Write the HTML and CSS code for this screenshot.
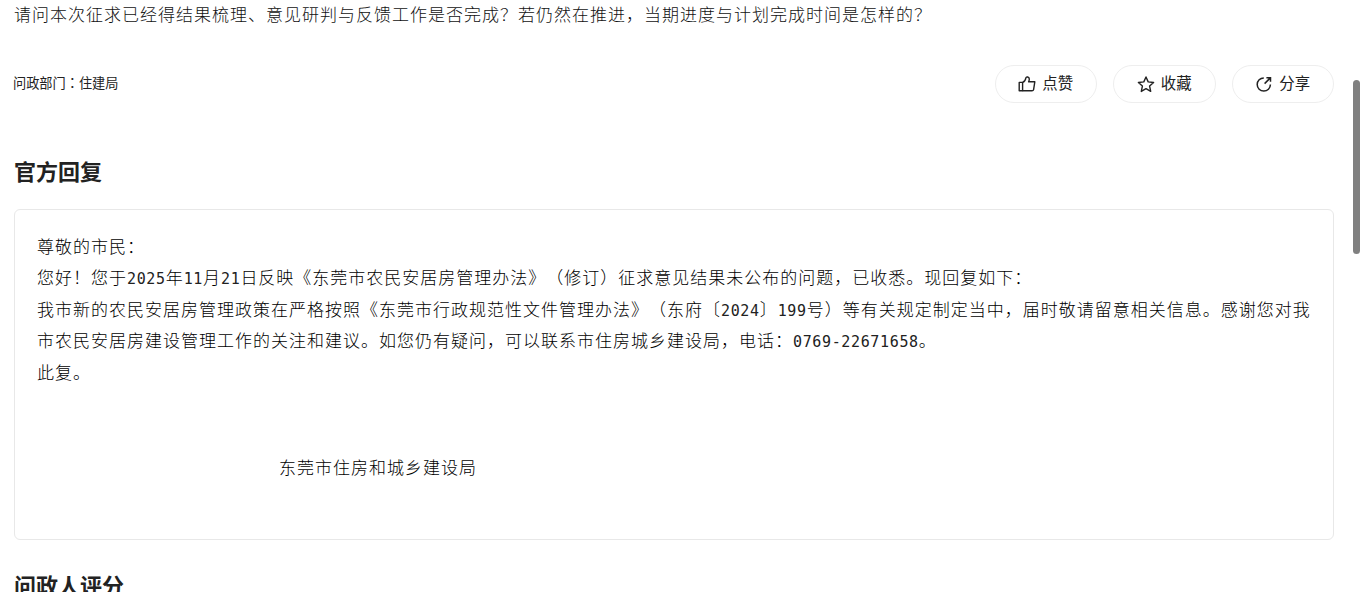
FILE: index.html
```html
<!DOCTYPE html>
<html lang="zh-CN">
<head>
    <meta charset="UTF-8">
    <meta name="viewport" content="width=device-width, initial-scale=1.0">
    <title>官方回复</title>
    <link rel="stylesheet" href="styles.css">
</head>
<body>
    <div class="container">
        <p class="question">请问本次征求已经得结果梳理、意见研判与反馈工作是否完成？若仍然在推进，当期进度与计划完成时间是怎样的？</p>

        <div class="meta">
            <div class="department">问政部门<span class="colon" lang="zh-TW">：</span>住建局</div>
            <div class="actions">
                <button type="button" class="action">
                    <svg class="icon" viewBox="0 0 18 18" fill="none" stroke="currentColor" stroke-width="1.4" stroke-linejoin="round">
                        <path d="M1.2 7.4H4.6V15.8H1.2Z"/>
                        <path d="M4.6 7.4C6.8 6.6 7.6 4.6 7.9 2.8C8.2 1.4 11.3 1.7 11.3 4.1C11.3 5.2 11 6 10.6 6.8H16.8L15.6 14.6Q15.3 15.8 14 15.8H4.6"/>
                    </svg>
                    <span>点赞</span>
                </button>
                <button type="button" class="action">
                    <svg class="icon" viewBox="0 0 18 18" fill="none" stroke="currentColor" stroke-width="1.4" stroke-linejoin="round">
                        <path d="M9 2L11.2 6.9L16.6 7.5L12.6 11.1L13.7 16.4L9 13.7L4.3 16.4L5.4 11.1L1.4 7.5L6.8 6.9Z"/>
                    </svg>
                    <span>收藏</span>
                </button>
                <button type="button" class="action">
                    <svg class="icon" viewBox="0 0 18 18" fill="none" stroke="currentColor" stroke-width="1.5">
                        <path d="M8.8 2.9A6.6 6.6 0 1 0 15.4 9.5"/>
                        <path d="M11.4 2.7H15.5V6.8M15.3 2.9L9.6 8.6"/>
                    </svg>
                    <span>分享</span>
                </button>
            </div>
        </div>

        <h2 class="title">官方回复</h2>
        <div class="reply">
            <p>尊敬的市民：</p>
            <p>您好！您于<span class="num">2025</span>年<span class="num">11</span>月<span class="num">21</span>日反映《东莞市农民安居房管理办法》（修订）征求意见结果未公布的问题，已收悉。现回复如下：</p>
            <p>我市新的农民安居房管理政策在严格按照《东莞市行政规范性文件管理办法》（东府〔<span class="num">2024</span>〕<span class="num">199</span>号）等有关规定制定当中，届时敬请留意相关信息。感谢您对我市农民安居房建设管理工作的关注和建议。如您仍有疑问，可以联系市住房城乡建设局，电话：<span class="num">0769-22671658</span>。</p>
            <p>此复。</p>
            <p class="signature">东莞市住房和城乡建设局</p>
        </div>

        <h2 class="title">问政人评分</h2>
    </div>
    <div class="scroll-thumb"></div>
</body>
</html>
```
FILE: styles.css
```css
* {
    margin: 0;
    padding: 0;
    box-sizing: border-box;
}

html {
    overflow: hidden;
}

body {
    height: 592px;
    overflow: hidden;
    background-color: #fff;
    color: #222;
    font-family: "Noto Sans CJK SC", sans-serif;
    text-spacing-trim: space-all;
}

.container {
    width: 1320px;
    margin-left: 14px;
}

.question {
    height: 65px;
    font-size: 17px;
    font-weight: 300;
    letter-spacing: 1px;
    line-height: 28px;
    color: #111;
    white-space: nowrap;
}

.meta {
    display: flex;
    justify-content: space-between;
    height: 38px;
    margin-bottom: 49px;
}

.department {
    margin-left: -1px;
    font-size: 13.2px;
    line-height: 36px;
}

.colon {
    font-family: "Noto Sans CJK TC", sans-serif;
    line-height: 1;
}

.actions {
    display: flex;
    gap: 16px;
}

.action {
    display: flex;
    align-items: center;
    justify-content: center;
    gap: 6px;
    width: 102.5px;
    height: 38px;
    border: 1px solid #eee;
    border-radius: 19px;
    background-color: #fff;
    color: #222;
    font-family: inherit;
    font-size: 15.4px;
    line-height: 34px;
}

.action span {
    padding-bottom: 4px;
}

.icon {
    width: 18px;
    height: 18px;
}

.title {
    height: 36px;
    font-size: 22px;
    font-weight: 700;
    line-height: 36px;
}

.reply {
    height: 331px;
    margin: 21px 0 26px;
    padding: 19.6px 22px 22px;
    border: 1px solid #e8e8e8;
    border-radius: 6px;
    color: #000;
    font-size: 17px;
    font-weight: 300;
    letter-spacing: 1px;
    line-height: 31.6px;
}

.num {
    font-family: "DejaVu Sans Mono", monospace;
    font-size: 15px;
    font-weight: 400;
    letter-spacing: 0.64px;
    line-height: 1;
    color: #222;
}

.signature {
    margin-top: 63.2px;
    padding-left: 242px;
}

.scroll-thumb {
    position: fixed;
    top: 80px;
    right: 0;
    width: 7px;
    height: 174px;
    border-radius: 4px;
    background-color: #808080;
}
```
